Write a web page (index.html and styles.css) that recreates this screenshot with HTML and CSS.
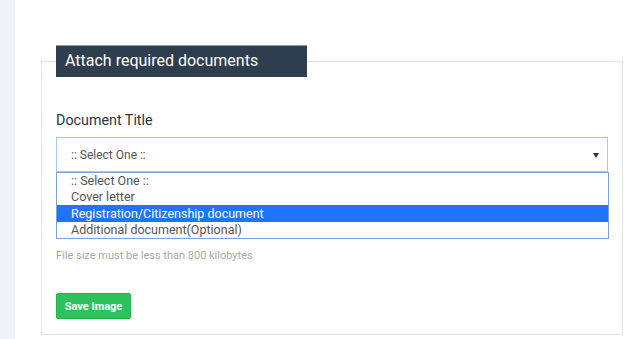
FILE: index.html
```html
<!DOCTYPE html>
<html lang="en">
<head>
    <meta charset="UTF-8" />
    <meta name="viewport" content="width=device-width, initial-scale=1.0" />
    <title>Attach Documents</title>
    <link rel="stylesheet" href="styles.css">
</head>
<body>
    <div class="page">
        <div class="sidebar"></div>
        <div class="main">
            <fieldset class="box">
                <legend>Attach required documents</legend>
                <div class="field">
                    <label class="label">Document Title</label>
                    <div class="select-wrap">
                        <div class="select">
                            <span>:: Select One ::</span>
                            <span class="arrow"></span>
                        </div>
                        <ul class="options">
                            <li>:: Select One ::</li>
                            <li>Cover letter</li>
                            <li class="active">Registration/Citizenship document</li>
                            <li>Additional document(Optional)</li>
                        </ul>
                    </div>
                </div>
                <p class="help">File size must be less than 800 kilobytes</p>
                <button class="save">Save Image</button>
            </fieldset>
        </div>
    </div>
</body>
</html>
```

FILE: styles.css
```css
* { box-sizing: border-box; margin: 0; padding: 0; }
body {
    font-family: Roboto, "Liberation Sans", Arial, sans-serif;
    background-color: #fff;
    color: #333;
}
.page {
    display: flex;
    height: 339px;
    overflow: hidden;
}
.sidebar {
    width: 15px;
    background-color: #eef3f7;
}
.main {
    flex: 1;
    padding: 45px 17px 0 26px;
}
/* form box */
.box {
    border: 1px solid #dfe6ec;
    padding: 0 14px 0 14px;
    height: 290px;
}
.box legend {
    width: 251px;
    height: 32px;
    padding: 0 9px;
    background-color: #2f3e4e;
    border-top: 1px solid #8a98a6;
    color: #fff;
    font-size: 16px;
    line-height: 30px;
}
.field {
    margin-top: 33px;
}
.label {
    display: block;
    font-size: 14.3px;
    line-height: 20px;
    color: #333;
    margin-bottom: 7px;
}
.select-wrap {
    position: relative;
}
.select {
    height: 35px;
    border: 1px solid #a9c6ef;
    display: flex;
    align-items: center;
    justify-content: space-between;
    padding: 0 8px 0 14px;
    font-size: 12px;
    color: #555;
}
.arrow {
    width: 0;
    height: 0;
    border-left: 3px solid transparent;
    border-right: 3px solid transparent;
    border-top: 5px solid #333;
    margin-top: 1px;
}
.options {
    position: absolute;
    left: 0;
    right: -1px;
    top: 35px;
    list-style: none;
    background: #fff;
    border: 1px solid #7f9fdc;
}
.options li {
    font-size: 12.5px;
    line-height: 16px;
    padding-left: 14px;
    color: #555;
}
.options li.active {
    background-color: #1e74fb;
    color: #fff;
    line-height: 17px;
}
.help {
    margin-top: 77px;
    font-size: 11px;
    color: #a9a9a9;
}
.save {
    margin-top: 31px;
    width: 75px;
    height: 26px;
    background-color: #2dc25d;
    border: 1px solid #22b34f;
    border-radius: 2px;
    color: #fff;
    font-family: Roboto, "Liberation Sans", Arial, sans-serif;
    font-size: 11px;
    font-weight: bold;
}
```
